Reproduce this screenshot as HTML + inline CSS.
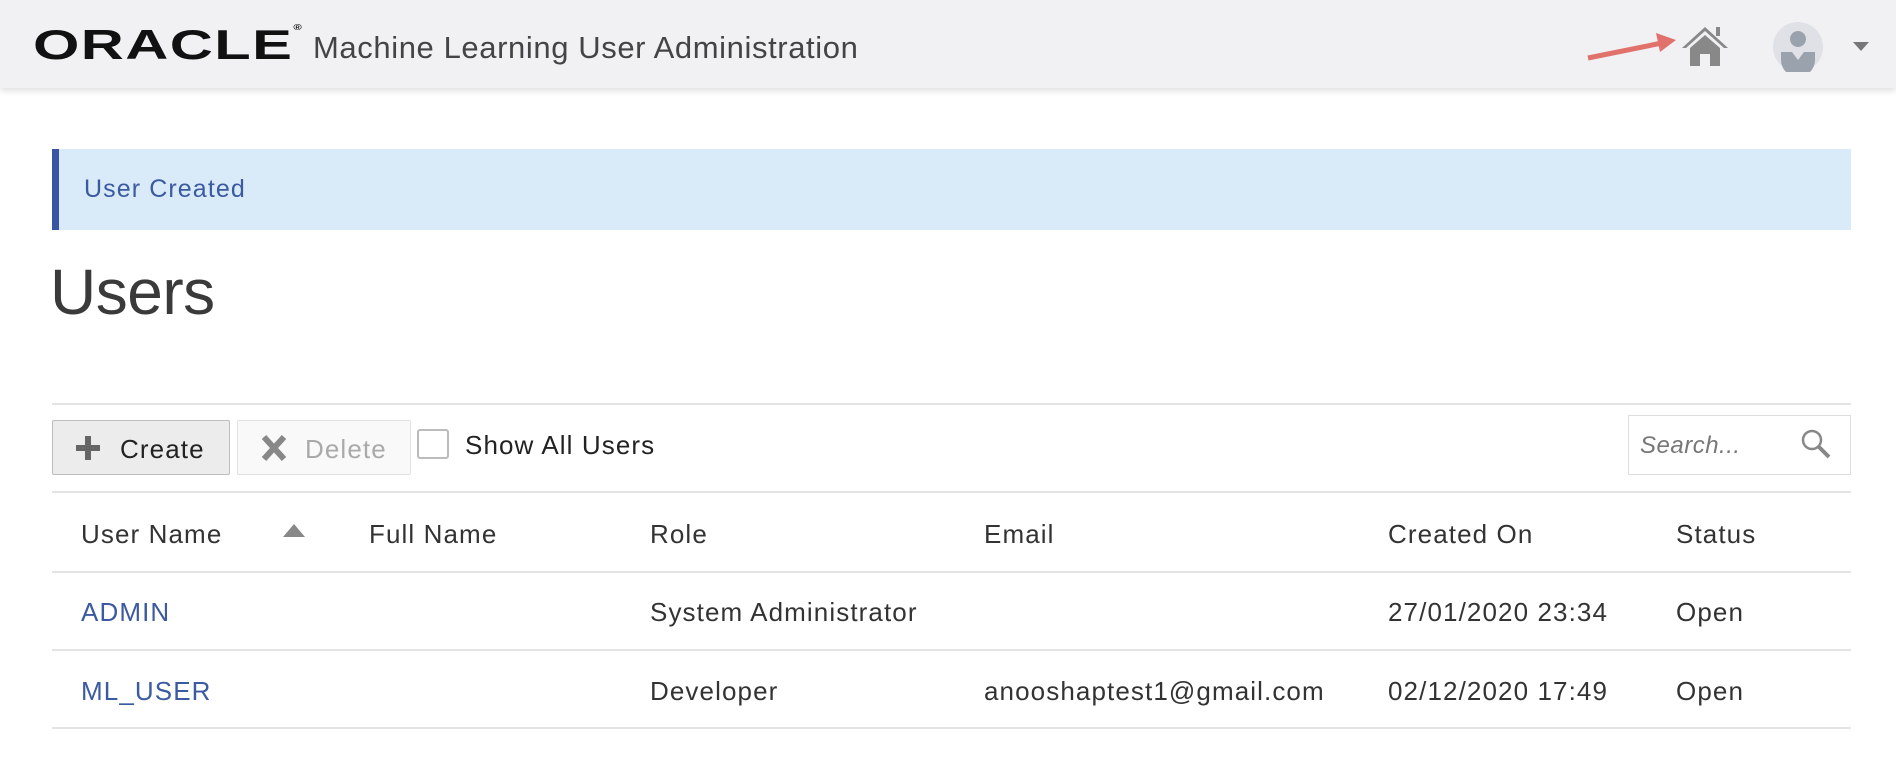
<!DOCTYPE html>
<html><head><meta charset="utf-8"><style>
*{margin:0;padding:0;box-sizing:border-box}
body{width:1896px;height:764px;background:#fff;font-family:"Liberation Sans",Arial,sans-serif;color:#333;position:relative;overflow:hidden}
.hdr{position:absolute;left:0;top:0;width:1896px;height:88px;background:#f1f1f4;box-shadow:0 3px 6px rgba(0,0,0,0.12)}
.logo{position:absolute;left:33px;top:24px;font-size:42px;font-weight:bold;letter-spacing:1px;color:#111;transform:scaleX(1.42);transform-origin:left;font-family:"Liberation Sans",sans-serif;line-height:1}
.ttl{position:absolute;left:313px;top:30px;font-size:31px;color:#444;letter-spacing:0.6px}
.a{position:absolute;font-size:26px;white-space:nowrap;letter-spacing:1.1px}
.ln{position:absolute;left:52px;width:1799px;height:2px;background:#e4e4e4}
.btn{position:absolute;top:420px;height:55px;border:1px solid #d0d0d0;border-radius:2px}
</style></head><body>
<div class="hdr">
<div class="logo">ORACLE<span style="font-size:8px;vertical-align:top">®</span></div>
<div class="ttl">Machine Learning User Administration</div>
<svg style="position:absolute;left:1580px;top:30px" width="100" height="35"><line x1="8" y1="28" x2="82" y2="13" stroke="#e0716b" stroke-width="5"/><polygon points="96,10 76,3 80,22" fill="#e0716b"/></svg>
<svg style="position:absolute;left:1682px;top:24px" width="50" height="44"><polygon points="23,3 0,24 4,24 23,7 42,24 46,24" fill="#888"/><rect x="34" y="3" width="4" height="9" fill="#888"/><polygon points="8,24 23,11 38,24 38,42 28,42 28,30 18,30 18,42 8,42" fill="#888"/></svg>
<svg style="position:absolute;left:1773px;top:22px" width="50" height="50"><circle cx="25" cy="25" r="25" fill="#dfe1e6"/><circle cx="25" cy="17" r="8" fill="#9aa3ad"/><path d="M8,30 h11 l6,8 l6,-8 h11 v8 a17 17 0 0 1 -34 0z" fill="#9aa3ad"/></svg>
<svg style="position:absolute;left:1853px;top:42px" width="16" height="10"><polygon points="0,0 16,0 8,9" fill="#777"/></svg>
</div>
<div style="position:absolute;left:52px;top:149px;width:1799px;height:81px;background:#d9eaf8;border-left:7px solid #3a56a3"></div>
<div class="a" style="left:84px;top:175px;font-size:25px;color:#3b5aa0">User Created</div>
<div class="a" style="left:50px;top:255px;font-size:64px;color:#3a3a3a;letter-spacing:-0.5px">Users</div>
<div class="ln" style="top:403px"></div>
<div class="btn" style="left:52px;width:178px;background:#ececec;border-color:#bdbdbd"></div>
<svg style="position:absolute;left:76px;top:436px" width="24" height="24"><rect x="9" y="0" width="6" height="24" fill="#666"/><rect x="0" y="9" width="24" height="6" fill="#666"/></svg>
<div class="a" style="left:120px;top:434px;color:#222">Create</div>
<div class="btn" style="left:237px;width:174px;background:#f9f9f9;border-color:#e2e2e2"></div>
<svg style="position:absolute;left:260px;top:434px" width="28" height="28"><path d="M4,3 L24,25 M24,3 L4,25" stroke="#888" stroke-width="6"/></svg>
<div class="a" style="left:305px;top:434px;color:#aaa">Delete</div>
<div style="position:absolute;left:417px;top:429px;width:32px;height:30px;border:2px solid #bbb;border-radius:3px;background:#fff"></div>
<div class="a" style="left:465px;top:430px;color:#222">Show All Users</div>
<div style="position:absolute;left:1628px;top:415px;width:223px;height:60px;border:1px solid #ddd;background:#fff"></div>
<div class="a" style="left:1640px;top:432px;color:#777;font-style:italic;font-size:24px;letter-spacing:0.5px">Search...</div>
<svg style="position:absolute;left:1800px;top:428px" width="32" height="32"><circle cx="12" cy="12" r="9" stroke="#888" stroke-width="2.5" fill="none"/><line x1="19" y1="19" x2="29" y2="29" stroke="#888" stroke-width="4"/></svg>
<div class="ln" style="top:491px"></div>
<div class="a" style="left:81px;top:519px">User Name</div>
<svg style="position:absolute;left:283px;top:524px" width="22" height="14"><polygon points="0,13 22,13 11,0" fill="#888"/></svg>
<div class="a" style="left:369px;top:519px">Full Name</div>
<div class="a" style="left:650px;top:519px">Role</div>
<div class="a" style="left:984px;top:519px">Email</div>
<div class="a" style="left:1388px;top:519px">Created On</div>
<div class="a" style="left:1676px;top:519px">Status</div>
<div class="ln" style="top:571px"></div>
<div class="a" style="left:81px;top:597px;color:#3b5aa0">ADMIN</div>
<div class="a" style="left:650px;top:597px">System Administrator</div>
<div class="a" style="left:1388px;top:597px">27/01/2020 23:34</div>
<div class="a" style="left:1676px;top:597px">Open</div>
<div class="ln" style="top:649px"></div>
<div class="a" style="left:81px;top:676px;color:#3b5aa0">ML_USER</div>
<div class="a" style="left:650px;top:676px">Developer</div>
<div class="a" style="left:984px;top:676px">anooshaptest1@gmail.com</div>
<div class="a" style="left:1388px;top:676px">02/12/2020 17:49</div>
<div class="a" style="left:1676px;top:676px">Open</div>
<div class="ln" style="top:727px"></div>
</body></html>
